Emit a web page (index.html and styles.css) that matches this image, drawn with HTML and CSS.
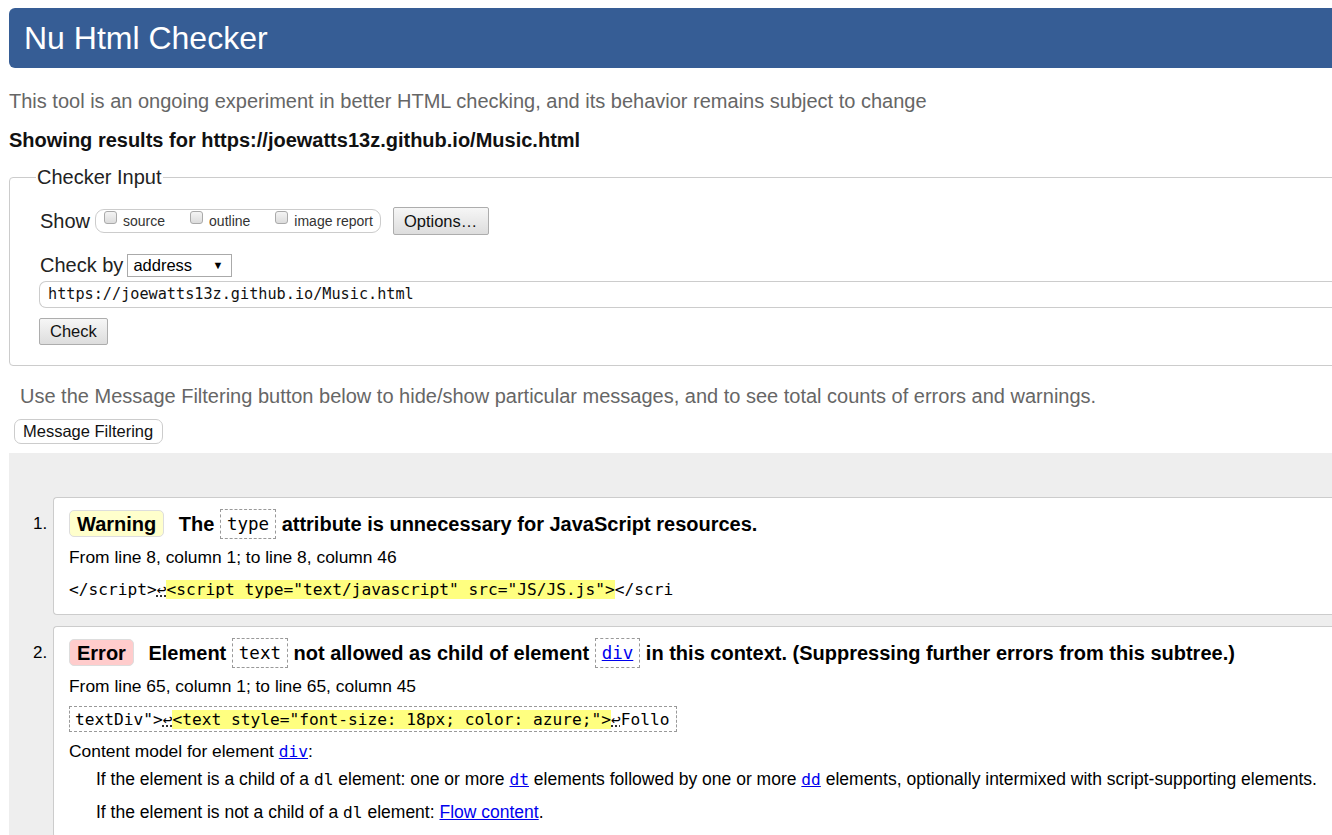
FILE: index.html
```html
<!DOCTYPE html>
<html lang="en">
<head>
<meta charset="utf-8">
<title>Showing results for https://joewatts13z.github.io/Music.html - Nu Html Checker</title>
<link rel="stylesheet" href="styles.css">
</head>
<body>
<div class="page">
  <h1 class="masthead">Nu Html Checker</h1>
  <p class="about">This tool is an ongoing experiment in better HTML checking, and its behavior remains subject to change</p>
  <p class="showing">Showing results for https://joewatts13z.github.io/Music.html</p>

  <fieldset class="input">
    <legend>Checker Input</legend>
    <div class="row show-row">
      <span class="lbl">Show</span>
      <span class="group">
        <label><span class="cb"></span>source</label>
        <label><span class="cb"></span>outline</label>
        <label><span class="cb"></span>image report</label>
      </span>
      <span class="btn options">Options…</span>
    </div>
    <div class="row by-row">
      <span class="lbl">Check by</span>
      <span class="select">address<span class="arrow">▼</span></span>
    </div>
    <div class="url">https://joewatts13z.github.io/Music.html</div>
    <span class="btn check">Check</span>
  </fieldset>

  <p class="filter-note">Use the Message Filtering button below to hide/show particular messages, and to see total counts of errors and warnings.</p>
  <span class="btn filtering">Message Filtering</span>

  <div class="results">
    <ol class="messages">
      <li class="msg">
        <span class="num">1.</span>
        <div class="card">
          <p class="title"><span class="badge warning">Warning</span> The <code class="cd">type</code> attribute is unnecessary for JavaScript resources.</p>
          <p class="location">From line 8, column 1; to line 8, column 46</p>
          <p class="extract"><code>&lt;/script&gt;<span class="lf">↩</span><mark>&lt;script type="text/javascript" src="JS/JS.js"&gt;</mark>&lt;/scri</code></p>
        </div>
      </li>
      <li class="msg">
        <span class="num">2.</span>
        <div class="card">
          <p class="title"><span class="badge error">Error</span> Element <code class="cd">text</code> not allowed as child of element <code class="cd"><a href="#">div</a></code> in this context. (Suppressing further errors from this subtree.)</p>
          <p class="location">From line 65, column 1; to line 65, column 45</p>
          <p class="extract boxed-wrap"><code class="boxed">textDiv"&gt;<span class="lf">↩</span><mark>&lt;text style="font-size: 18px; color: azure;"&gt;</mark><span class="lf">↩</span>Follo</code></p>
          <p class="cm">Content model for element <code><a href="#">div</a></code>:</p>
          <p class="dd first">If the element is a child of a <code>dl</code> element: one or more <code><a href="#">dt</a></code> elements followed by one or more <code><a href="#">dd</a></code> elements, optionally intermixed with script-supporting elements.</p>
          <p class="dd">If the element is not a child of a <code>dl</code> element: <a href="#">Flow content</a>.</p>
        </div>
      </li>
    </ol>
  </div>
</div>
</body>
</html>
```

FILE: styles.css
```css
html, body {
  margin: 0;
  padding: 0;
  background: #fff;
  overflow: hidden;
}
body {
  font-family: "Liberation Sans", Arial, sans-serif;
  color: #000;
}
.page {
  width: 1420px;
  padding: 8px 0 0 9px;
}
.masthead {
  margin: 0;
  height: 60px;
  box-sizing: border-box;
  padding: 0 0 0 15px;
  line-height: 60px;
  background: #365d95;
  color: #fff;
  font-size: 32px;
  font-weight: normal;
  border-radius: 6px 0 0 6px;
}
.about {
  margin: 21px 0 0;
  font-size: 20px;
  line-height: 24px;
  color: #666;
}
.showing {
  margin: 15px 0 0;
  font-size: 20px;
  line-height: 24px;
  font-weight: bold;
  color: #111;
}
fieldset.input {
  margin: 14px 0 0;
  padding: 18px 0 20px 30px;
  border: 1px solid #ccc;
  border-radius: 4px;
  min-width: 0;
}
fieldset.input legend {
  padding: 0 1px;
  margin-left: -4px;
  font-size: 20px;
  line-height: 23px;
  color: #222;
}
.row {
  display: flex;
  align-items: center;
}
.lbl {
  font-size: 20px;
  color: #222;
}
.show-row { height: 28px; }
.group {
  display: inline-flex;
  align-items: center;
  margin-left: 5px;
  height: 24px;
  box-sizing: border-box;
  border: 1px solid #ccc;
  border-radius: 9px;
  padding: 0 7px 0 8px;
  font-size: 14px;
  color: #333;
}
.group label {
  display: inline-flex;
  align-items: center;
  margin-right: 25px;
}
.group label:last-child { margin-right: 0; }
.cb {
  display: inline-block;
  width: 13px;
  height: 13px;
  box-sizing: border-box;
  border: 1px solid #aaa;
  border-radius: 3px;
  background: linear-gradient(#f4f4f4, #dcdcdc);
  margin-right: 6px;
  position: relative;
  top: -4px;
}
.btn {
  display: inline-block;
  box-sizing: border-box;
  border: 1px solid #adadad;
  background: linear-gradient(#f6f6f6, #dddddd);
  color: #111;
  font-size: 16.5px;
  border-radius: 2px;
}
.options {
  margin-left: 12px;
  height: 28px;
  line-height: 26px;
  padding: 0 11px 0 10px;
}
.by-row {
  margin-top: 18px;
  height: 24px;
}
.select {
  display: inline-flex;
  align-items: center;
  justify-content: space-between;
  margin-left: 4px;
  width: 105px;
  height: 23px;
  box-sizing: border-box;
  border: 1px solid #aaa;
  padding: 0 8px 0 5px;
  font-size: 16.5px;
  color: #000;
}
.arrow { font-size: 11px; }
.url {
  margin: 4px 0 0 -1px;
  height: 27px;
  box-sizing: border-box;
  border: 1px solid #ccc;
  border-right: none;
  border-radius: 7px 0 0 7px;
  padding: 0 0 0 8px;
  line-height: 25px;
  font-family: "DejaVu Sans Mono", "Liberation Mono", monospace;
  font-size: 15.2px;
  color: #111;
}
.check {
  display: block;
  width: max-content;
  margin: 10px 0 0 -1px;
  height: 27px;
  line-height: 25px;
  padding: 0 10px;
}
.filter-note {
  margin: 18px 0 0 11px;
  font-size: 20px;
  line-height: 24px;
  color: #666;
}
.filtering {
  display: block;
  width: max-content;
  margin: 11px 0 0 5px;
  height: 25px;
  line-height: 23px;
  padding: 0 9px 0 8px;
  background: #fff;
  border-color: #ccc;
  border-radius: 7px;
}
.results {
  margin-top: 9px;
  background: #eee;
  padding: 44px 0 0 0;
  min-height: 400px;
}
.messages {
  list-style: none;
  margin: 0;
  padding: 0;
}
.msg {
  display: flex;
  align-items: flex-start;
  margin-bottom: 11px;
}
.num {
  width: 44px;
  box-sizing: border-box;
  padding: 15px 0 0 24px;
  font-size: 17px;
  line-height: 24px;
}
.card {
  flex: 1;
  background: #fff;
  border: 1px solid #ccc;
  border-right: none;
  border-radius: 4px 0 0 4px;
  padding: 11px 0 13px 15px;
}
.card p { margin: 0; }
.title {
  font-size: 20px;
  font-weight: bold;
  line-height: 30px;
  color: #000;
}
.badge {
  display: inline-block;
  height: 27px;
  line-height: 26px;
  box-sizing: border-box;
  padding: 0 7px;
  border-radius: 5px;
  margin-right: 9px;
}
.warning {
  background: #ffffcc;
  border: 1px solid #ddd;
}
.error {
  background: #ffcccc;
  border: 1px solid #ddd;
}
code {
  font-family: "DejaVu Sans Mono", "Liberation Mono", monospace;
  font-weight: normal;
}
.cd {
  display: inline-block;
  font-size: 17.5px;
  line-height: 28px;
  border: 1px dashed #999;
  padding: 0 6px;
  vertical-align: 1px;
}
a { color: #0000ee; }
.card .location {
  margin-top: 6px;
  font-size: 17.4px;
  line-height: 24px;
}
.card .extract {
  margin-top: 9px;
  font-size: 16.2px;
  line-height: 22px;
}
.extract code { font-size: 16.2px; }
.card .boxed-wrap {
  display: flex;
  margin-top: 8px;
}
.boxed {
  display: block;
  border: 1px dashed #999;
  padding: 2px 6px 1px 5px;
  line-height: 21px;
}
mark { background: #ffff80; color: #000; }
.lf {
  text-decoration: underline dotted;
}
.card .cm {
  margin-top: 8px;
  font-size: 17.4px;
  line-height: 22px;
}
.card .dd {
  margin: 11px 0 0 27px;
  font-size: 17.5px;
  line-height: 22px;
}
.card .dd.first { margin-top: 5px; }
.card .dd + .dd { margin-top: 10px; }
.dd code, .cm code { font-size: 16.2px; }
```
